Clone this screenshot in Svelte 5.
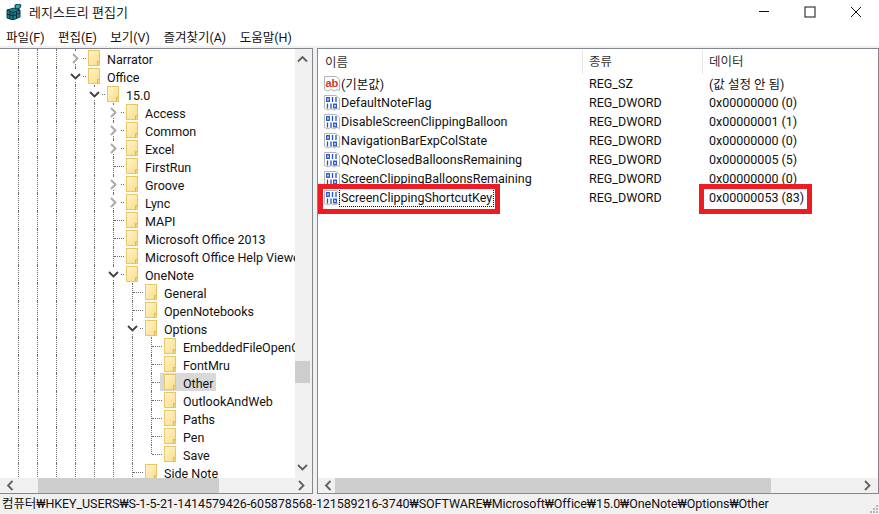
<script>
	const menus = ['파일(F)', '편집(E)', '보기(V)', '즐겨찾기(A)', '도움말(H)'];

	// d = tree depth, open: true/false has an expander, undefined is a leaf
	const nodes = [
		{ name: 'Narrator', d: 3, open: false },
		{ name: 'Office', d: 3, open: true },
		{ name: '15.0', d: 4, open: true },
		{ name: 'Access', d: 5, open: false },
		{ name: 'Common', d: 5, open: false },
		{ name: 'Excel', d: 5, open: false },
		{ name: 'FirstRun', d: 5 },
		{ name: 'Groove', d: 5, open: false },
		{ name: 'Lync', d: 5, open: false },
		{ name: 'MAPI', d: 5 },
		{ name: 'Microsoft Office 2013', d: 5 },
		{ name: 'Microsoft Office Help Viewer', d: 5 },
		{ name: 'OneNote', d: 5, open: true },
		{ name: 'General', d: 6 },
		{ name: 'OpenNotebooks', d: 6 },
		{ name: 'Options', d: 6, open: true },
		{ name: 'EmbeddedFileOpenCounts', d: 7 },
		{ name: 'FontMru', d: 7 },
		{ name: 'Other', d: 7, selected: true },
		{ name: 'OutlookAndWeb', d: 7 },
		{ name: 'Paths', d: 7 },
		{ name: 'Pen', d: 7 },
		{ name: 'Save', d: 7, last: true },
		{ name: 'Side Note', d: 6 }
	];

	const values = [
		{ name: '(기본값)', type: 'REG_SZ', data: '(값 설정 안 됨)', icon: 'ab' },
		{ name: 'DefaultNoteFlag', type: 'REG_DWORD', data: '0x00000000 (0)' },
		{ name: 'DisableScreenClippingBalloon', type: 'REG_DWORD', data: '0x00000001 (1)' },
		{ name: 'NavigationBarExpColState', type: 'REG_DWORD', data: '0x00000000 (0)' },
		{ name: 'QNoteClosedBalloonsRemaining', type: 'REG_DWORD', data: '0x00000005 (5)' },
		{ name: 'ScreenClippingBalloonsRemaining', type: 'REG_DWORD', data: '0x00000000 (0)' },
		{ name: 'ScreenClippingShortcutKey', type: 'REG_DWORD', data: '0x00000053 (83)', focus: true }
	];
</script>

{#snippet chevron(points, color = '#606060', w = 1.8)}
	<svg class="chev" width="11" height="11" viewBox="0 0 11 11">
		<polyline {points} fill="none" stroke={color} stroke-width={w} />
	</svg>
{/snippet}

{#snippet folder()}
	<svg class="folder" width="12" height="16" viewBox="0 0 12 16">
		<defs>
			<linearGradient id="fold" x1="0" y1="0" x2="1" y2="1">
				<stop offset="0" stop-color="#fff4cf" />
				<stop offset="1" stop-color="#fbdc84" />
			</linearGradient>
		</defs>
		<rect x="0.5" y="0.5" width="11" height="15" fill="url(#fold)" stroke="#e9c765" />
		<path d="M9.5 15.5V11.5H11.5" fill="#f4cf63" stroke="#e3bb4b" />
	</svg>
{/snippet}

{#snippet regIcon(kind)}
	<svg class="regicon" width="16" height="16" viewBox="0 0 16 16">
		<path d="M0.5 0.5H12L15.5 3.500V14.500L13 13.500L10 15L7 13.500L4 15L0.500 13.500Z" fill="#fff" stroke="#b4b4b4" />
		{#if kind === 'ab'}
			<text x="1.5" y="11" class="ab">ab</text>
		{:else}
			<g fill="none" stroke="#2050c8" stroke-width="1.3">
				<rect x="2.7" y="2.700" width="2.600" height="3.600" />
				<path d="M8.500 2v5M12 2v5" />
				<path d="M3.500 8.500v5M7 8.500v5" />
				<rect x="9.700" y="9.200" width="2.600" height="3.600" />
			</g>
		{/if}
	</svg>
{/snippet}

<div class="window">
	<header class="titlebar">
		<svg class="appicon" width="17" height="16" viewBox="0 0 17 16">
			<path d="M1 6l7-2 6 2v7l-7 3-6-2z" fill="#1e7f8c" stroke="#0d3c4a" />
			<path d="M1 6l6 2.500 7-2.500M7 8.500V16M1 10l6 2 7-3M4 7.500v7.500M10.500 7.500v7" fill="none" stroke="#0b2e3a" />
			<path d="M9 1l3-1 3 1-1 3-3 1-2-2z" fill="#27a6b5" stroke="#0d3c4a" />
		</svg>
		<span class="title">레지스트리 편집기</span>
		<div class="controls">
			<svg width="12" height="12" viewBox="0 0 12 12"><path d="M1 5.500H11" stroke="#111" /></svg>
			<svg width="12" height="12" viewBox="0 0 12 12"><rect x="1" y="1" width="10" height="10" fill="none" stroke="#111" /></svg>
			<svg width="12" height="12" viewBox="0 0 12 12"><path d="M1 1L11 11M11 1L1 11" stroke="#111" /></svg>
		</div>
	</header>

	<nav class="menubar">
		{#each menus as menu}
			<span>{menu}</span>
		{/each}
	</nav>

	<main class="panes">
		<section class="pane tree-pane">
			<div class="tree-body">
				<div class="tree">
					{#each nodes as node}
						<div class="row">
							{#each Array(node.d) as _}
								<span class="guide"></span>
							{/each}
							<span class="own" class:last={node.last}>
								<i class="dash"></i>
								{#if node.open === true}
									<b class="exp">{@render chevron('1,3 5.500,7.500 10,3', '#404040')}</b>
								{:else if node.open === false}
									<b class="exp">{@render chevron('3,1 7.500,5.500 3,10', '#a6a6a6')}</b>
								{/if}
							</span>
							<span class="node" class:selected={node.selected}>
								{@render folder()}
								<span class="label">{node.name}</span>
							</span>
						</div>
					{/each}
				</div>
				<div class="vscroll">
					{@render chevron('1,7.500 5.500,3 10,7.500')}
					<div class="vtrack"><div class="vthumb"></div></div>
					{@render chevron('1,3 5.500,7.500 10,3')}
				</div>
			</div>
			<div class="hscroll">
				{@render chevron('7.500,1 3,5.500 7.500,10')}
				<div class="htrack"><div class="hthumb tree-thumb"></div></div>
				{@render chevron('3,1 7.500,5.500 3,10')}
			</div>
		</section>

		<div class="splitter"></div>

		<section class="pane list-pane">
			<div class="list">
				<div class="head">
					<span>이름</span>
					<span>종류</span>
					<span>데이터</span>
				</div>
				{#each values as v}
					<div class="value">
						<span class="name">
							{@render regIcon(v.icon)}
							<span class:focus={v.focus}>{v.name}</span>
						</span>
						<span>{v.type}</span>
						<span>{v.data}</span>
					</div>
				{/each}
				<div class="mark mark-name"></div>
				<div class="mark mark-data"></div>
			</div>
			<div class="hscroll">
				{@render chevron('7.500,1 3,5.500 7.500,10')}
				<div class="htrack"><div class="hthumb list-thumb"></div></div>
				{@render chevron('3,1 7.500,5.500 3,10')}
			</div>
		</section>
	</main>

	<footer class="status">
		컴퓨터₩HKEY_USERS₩S-1-5-21-1414579426-605878568-121589216-3740₩SOFTWARE₩Microsoft₩Office₩15.0₩OneNote₩Options₩Other
		<svg class="grip" width="10" height="10" viewBox="0 0 10 10" fill="#b5b5b5">
			<rect x="7" y="1" width="2" height="2" />
			<rect x="4" y="4" width="2" height="2" />
			<rect x="7" y="4" width="2" height="2" />
			<rect x="1" y="7" width="2" height="2" />
			<rect x="4" y="7" width="2" height="2" />
			<rect x="7" y="7" width="2" height="2" />
		</svg>
	</footer>
</div>

<style>
	:global(body) {
		margin: 0;
		background: #fff;
	}
	.window {
		width: 879px;
		height: 514px;
		display: flex;
		flex-direction: column;
		overflow: hidden;
		font-family: Roboto, 'Noto Sans CJK KR', sans-serif;
		font-size: 12.5px;
		color: #111;
	}

	/* title + menu */
	.titlebar {
		height: 26px;
		flex: none;
		display: flex;
		align-items: center;
		padding: 0 0 2px 6px;
		box-sizing: border-box;
	}
	.appicon {
		margin-right: 6px;
	}
	.title {
		font-size: 13px;
		color: #222;
		margin-top: -2px;
	}
	.controls {
		margin-left: auto;
		display: flex;
		gap: 34px;
		padding-right: 17px;
	}
	.menubar {
		height: 20px;
		flex: none;
		display: flex;
		gap: 13.5px;
		align-items: center;
		padding-left: 6px;
		box-sizing: border-box;
	}

	/* panes */
	.panes {
		flex: 1;
		min-height: 0;
		display: flex;
		background: #f0f0f0;
		padding-top: 2px;
	}
	.pane {
		display: flex;
		flex-direction: column;
		background: #fff;
		border-top: 1px solid #828790;
		border-right: 1px solid #828790;
		border-bottom: 1px solid #828790;
		overflow: hidden;
		position: relative;
	}
	.tree-pane {
		width: 312px;
	}
	.splitter {
		width: 4px;
	}
	.list-pane {
		width: 560px;
		border-left: 1px solid #828790;
	}

	/* tree */
	.tree-body {
		flex: 1;
		min-height: 0;
		display: flex;
	}
	.tree {
		flex: 1;
		min-width: 0;
		overflow: hidden;
		padding-left: 9px;
	}
	.row {
		height: 18px;
		display: flex;
		white-space: nowrap;
	}
	.guide,
	.own {
		flex: none;
		position: relative;
		height: 18px;
	}
	.guide {
		width: 19px;
	}
	.own {
		width: 18px;
	}
	.guide::before,
	.own::before {
		content: '';
		position: absolute;
		left: 9px;
		top: 0;
		bottom: 0;
		border-left: 1px dotted #6e6e6e;
	}
	.own.last::before {
		bottom: 9px;
	}
	.dash {
		position: absolute;
		left: 10px;
		top: 9px;
		width: 10px;
		border-top: 1px dotted #6e6e6e;
	}
	.exp {
		position: absolute;
		left: 3px;
		top: 3px;
		width: 13px;
		height: 12px;
		background: #fff;
		display: flex;
		align-items: center;
		justify-content: center;
	}
	.node {
		display: flex;
		align-items: center;
		gap: 7px;
		padding: 0 3px 0 4px;
		height: 18px;
		position: relative;
	}
	.node.selected {
		background: #d9d9d9;
	}
	.label {
		padding-top: 2px;
	}
	.folder {
		flex: none;
	}
	.chev {
		display: block;
		flex: none;
	}

	/* scrollbars */
	.vscroll {
		width: 15px;
		flex: none;
		background: #f0f0f0;
		border-right: 2px solid #f0f0f0;
		display: flex;
		flex-direction: column;
		align-items: center;
		padding: 5px 0;
	}
	.vtrack {
		flex: 1;
		width: 15px;
		padding-top: 296px;
	}
	.vthumb {
		height: 22px;
		background: #cdcdcd;
	}
	.hscroll {
		height: 15px;
		flex: none;
		background: #f0f0f0;
		display: flex;
		align-items: center;
		padding: 0 5px;
	}
	.htrack {
		flex: 1;
		height: 15px;
	}
	.hthumb {
		height: 15px;
		background: #cdcdcd;
	}
	.tree-thumb {
		width: 181px;
		margin-left: 22px;
	}
	.list-thumb {
		width: 436px;
		margin-left: 1px;
	}

	/* value list */
	.list {
		flex: 1;
		min-height: 0;
		position: relative;
	}
	.head,
	.value {
		display: grid;
		grid-template-columns: 264px 120px 1fr;
		padding-left: 7px;
		white-space: nowrap;
	}
	.head {
		height: 25px;
		align-items: center;
		color: #333;
		box-sizing: border-box;
	}
	.head span + span {
		border-left: 1px solid #e5e5e5;
		padding-left: 6px;
		margin-left: -7px;
		line-height: 24px;
	}
	.value {
		height: 19px;
		align-items: center;
	}
	.name {
		display: flex;
		align-items: center;
		gap: 1px;
		margin-left: -1px;
	}
	.regicon {
		flex: none;
	}
	.ab {
		font-family: 'Liberation Sans', sans-serif;
		font-size: 11px;
		font-weight: 700;
		fill: #d23a1e;
	}
	.focus {
		outline: 1px dotted #111;
		outline-offset: 1px;
	}

	/* red annotation boxes drawn over the list */
	.mark {
		position: absolute;
		border: 5px solid #ed1c24;
	}
	.mark-name {
		left: 0;
		top: 135px;
		width: 172px;
		height: 20px;
	}
	.mark-data {
		left: 381px;
		top: 135px;
		width: 103px;
		height: 20px;
	}

	.status {
		height: 20px;
		flex: none;
		background: #f0f0f0;
		padding-left: 2px;
		line-height: 20px;
		white-space: nowrap;
		letter-spacing: -0.08px;
		position: relative;
	}
	.grip {
		position: absolute;
		right: 0;
		bottom: 0;
	}
</style>
